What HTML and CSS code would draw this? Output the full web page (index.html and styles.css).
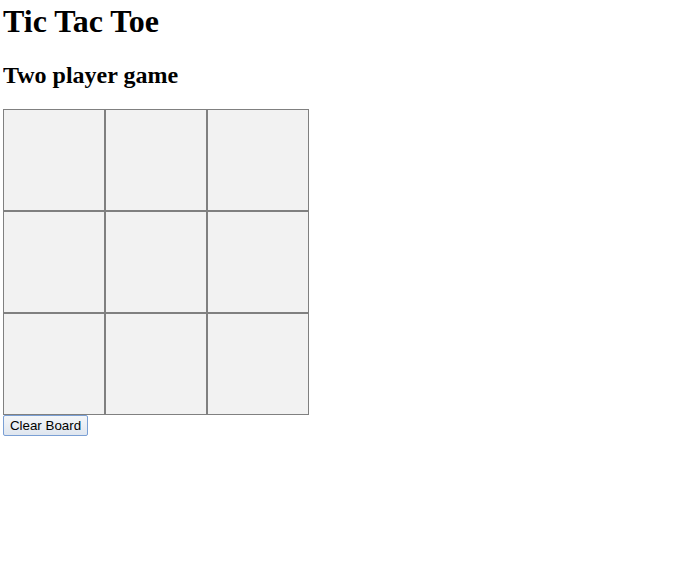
FILE: index.html
```html
<!DOCTYPE html>
<html>
<head>
<meta charset="utf-8">
<title>Tic Tac Toe</title>
<link rel="stylesheet" href="styles.css">
</head>
<body>
<h1 class="title">Tic Tac Toe</h1>
<h2 class="subtitle">Two player game</h2>
<div class="board">
  <div class="cell"></div><div class="cell"></div><div class="cell"></div>
  <div class="cell"></div><div class="cell"></div><div class="cell"></div>
  <div class="cell"></div><div class="cell"></div><div class="cell"></div>
</div>
<button class="clear-btn">Clear Board</button>
</body>
</html>
```
FILE: styles.css
```css
body {
  margin: 3px;
  font-family: "Liberation Serif", "Times New Roman", serif;
  background: #fff;
  color: #000;
}
.title {
  font-size: 32px;
  font-weight: bold;
  margin: 0 0 22.44px 0;
  line-height: normal;
}
.subtitle {
  font-size: 24px;
  font-weight: bold;
  margin: 19.92px 0 19.92px 0;
  line-height: normal;
}
.board {
  display: grid;
  grid-template-columns: repeat(3, 102px);
  grid-template-rows: repeat(3, 102px);
  width: 306px;
}
.cell {
  box-sizing: border-box;
  border: 1px solid #808080;
  background: #f2f2f2;
}
.clear-btn {
  display: block;
  box-sizing: border-box;
  width: 85px;
  height: 21px;
  margin: 0;
  padding: 0;
  white-space: nowrap;
  font-family: "Liberation Sans", Arial, sans-serif;
  font-size: 13.33px;
  color: #000;
  border: 1px solid #7a9fd4;
  border-radius: 2px;
  background: linear-gradient(#f4f6f9, #dfe6ef);
}
```
